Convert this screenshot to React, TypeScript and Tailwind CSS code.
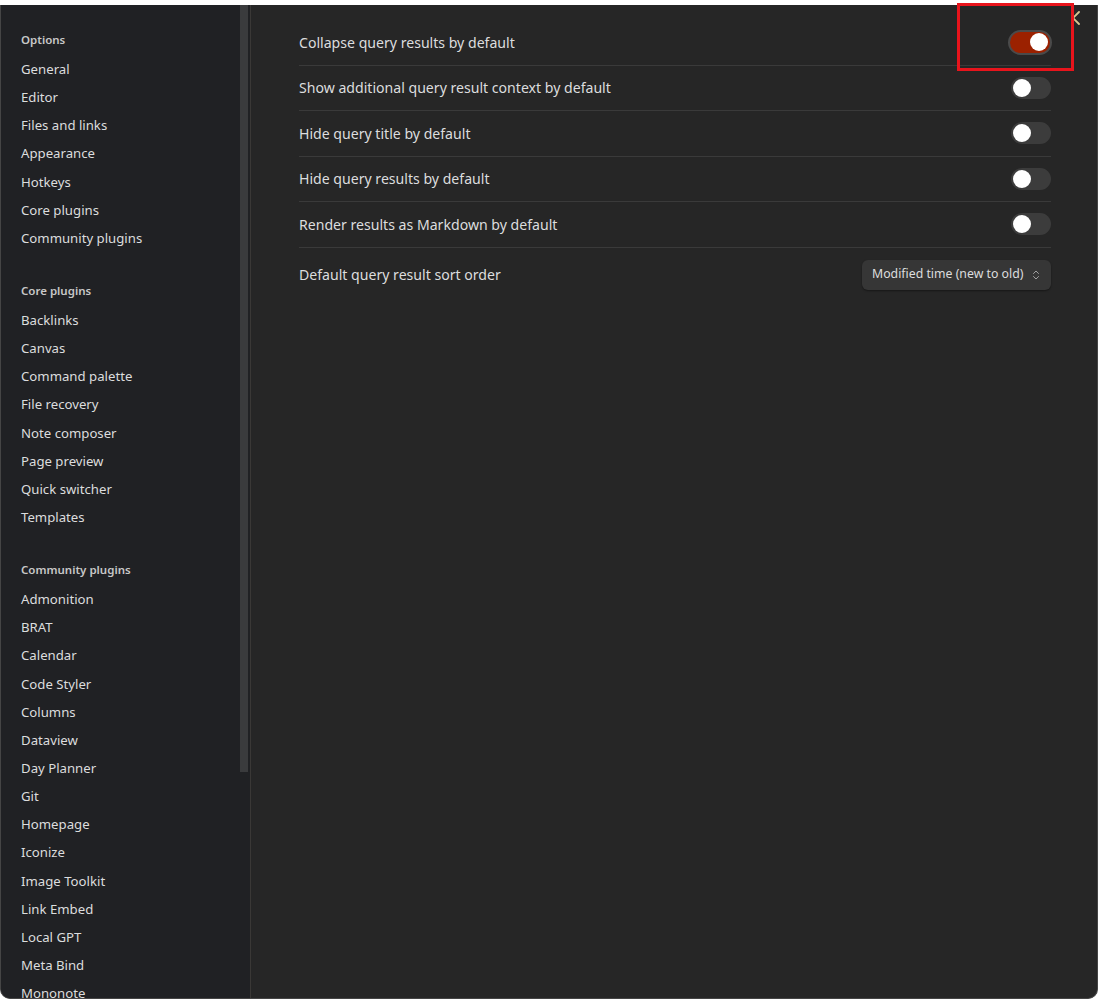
import { X, ChevronsUpDown } from 'lucide-react';

const optionLinks = ['General', 'Editor', 'Files and links', 'Appearance', 'Hotkeys', 'Core plugins', 'Community plugins'];
const coreLinks = ['Backlinks', 'Canvas', 'Command palette', 'File recovery', 'Note composer', 'Page preview', 'Quick switcher', 'Templates'];
const communityLinks = [
  'Admonition',
  'BRAT',
  'Calendar',
  'Code Styler',
  'Columns',
  'Dataview',
  'Day Planner',
  'Git',
  'Homepage',
  'Iconize',
  'Image Toolkit',
  'Link Embed',
  'Local GPT',
  'Meta Bind',
  'Mononote',
];

const settings = [
  { label: 'Collapse query results by default', on: true },
  { label: 'Show additional query result context by default', on: false },
  { label: 'Hide query title by default', on: false },
  { label: 'Hide query results by default', on: false },
  { label: 'Render results as Markdown by default', on: false },
];

const Group = ({ title, links }: { title: string; links: string[] }) => (
  <div className="flex flex-col">
    <div className="h-[30px] text-[11.5px] font-semibold leading-[30px] text-[#c8c8c8]">{title}</div>
    {links.map((l) => (
      <div key={l} className="h-[28.15px] whitespace-nowrap text-[13.2px] leading-[28px] text-[#dcddde]">
        {l}
      </div>
    ))}
  </div>
);

const Toggle = ({ on }: { on: boolean }) =>
  on ? (
    <div className="mr-[-1px] flex h-[25px] w-[44px] items-center justify-end rounded-full border-2 border-[#4a4a4a] bg-[#9b2100] pr-[2px]">
      <div className="h-[18px] w-[18px] rounded-full bg-white" />
    </div>
  ) : (
    <div className="flex h-[22px] w-[40px] items-center rounded-full bg-[#3c3c3c] pl-[2px]">
      <div className="h-[18px] w-[18px] rounded-full bg-white" />
    </div>
  );

export default function App() {
  return (
    <div
      className="relative h-screen w-full overflow-hidden bg-white pt-[5px]"
      style={{ fontFamily: '"Noto Sans", "Open Sans", sans-serif' }}
    >
      <div className="flex h-[994px] w-[1098px] overflow-hidden rounded-b-[10px] border border-t-0 border-[#454545] bg-[#262626]">
        <aside className="flex h-full w-[249px] shrink-0 bg-[#202124]">
          <div className="flex flex-1 flex-col gap-[24px] overflow-hidden pl-[20px] pt-[20px]">
            <Group title="Options" links={optionLinks} />
            <Group title="Core plugins" links={coreLinks} />
            <Group title="Community plugins" links={communityLinks} />
          </div>
          <div className="w-[10px] pr-[2px]">
            <div className="h-[767px] w-[8px] bg-[#3a3b3d]" />
          </div>
        </aside>
        <div className="w-px shrink-0 bg-[#3a3836]" />
        <main className="flex-1">
          <div className="flex w-[800px] flex-col pl-[48px] pt-[15px]">
            {settings.map((s) => (
              <div
                key={s.label}
                className="flex h-[45.5px] items-center justify-between border-b border-[#3a3a3a]"
              >
                <span className="text-[14.1px] text-[#dcddde]">{s.label}</span>
                <Toggle on={s.on} />
              </div>
            ))}
            <div className="flex h-[54px] items-center justify-between">
              <span className="text-[14.1px] text-[#dcddde]">Default query result sort order</span>
              <div className="flex h-[30px] w-[189px] items-center justify-between rounded-[6px] bg-[#363636] pl-[10px] pr-[9px] text-[12.3px] text-[#dcddde] shadow-[0_1px_2px_rgba(0,0,0,0.4)]">
                <span className="whitespace-nowrap">Modified time (new to old)</span>
                <ChevronsUpDown className="h-[12px] w-[12px] text-[#a0a0a0]" />
              </div>
            </div>
          </div>
        </main>
      </div>
      {/* close button, half hidden behind the highlight box */}
      <div className="absolute left-[1073px] top-[6px] h-[24px] w-[10px] overflow-hidden">
        <X className="ml-[-12px] h-[24px] w-[24px] text-[#d8c690]" strokeWidth={1.8} />
      </div>
      <div className="pointer-events-none absolute left-[957px] top-[3px] h-[68px] w-[117px] border-[3px] border-[#e8141c]" />
    </div>
  );
}
